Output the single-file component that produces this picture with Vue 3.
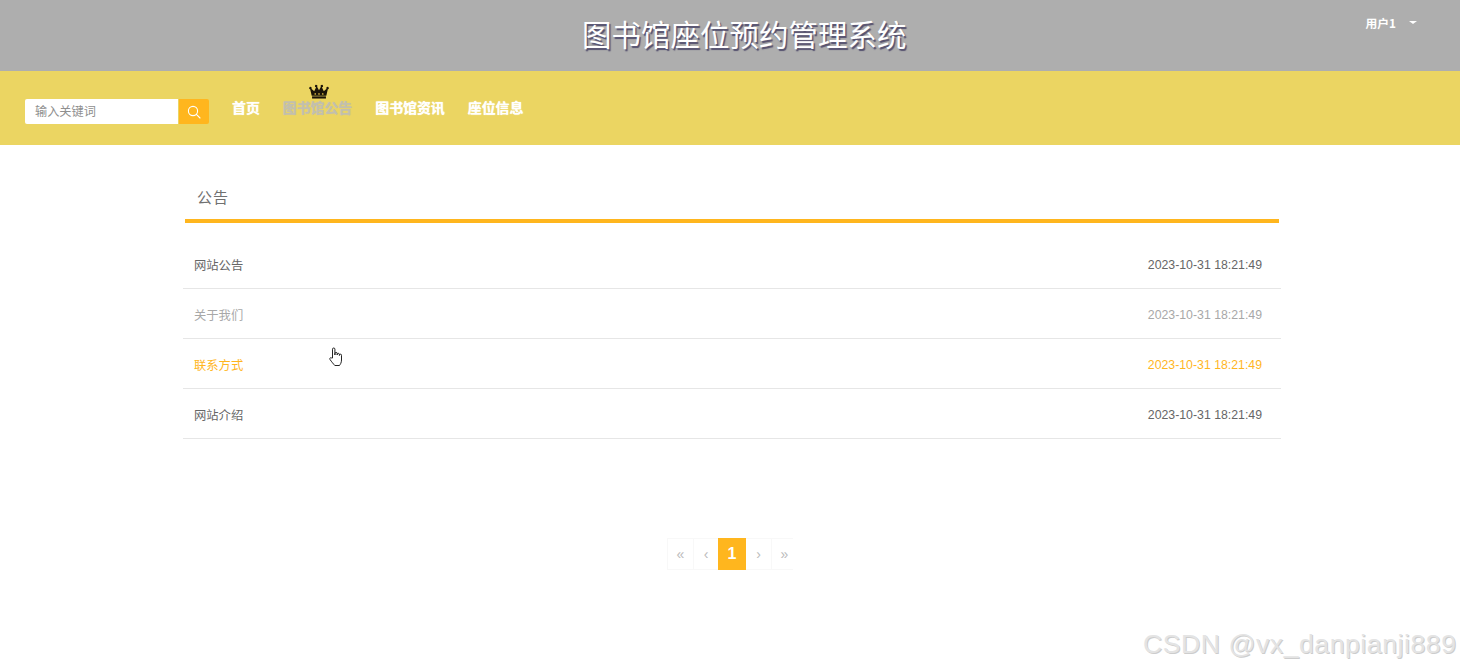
<script setup>
const navItems = [
  { label: '首页' },
  { label: '图书馆公告', active: true },
  { label: '图书馆资讯' },
  { label: '座位信息' },
]
const rows = [
  { title: '网站公告', time: '2023-10-31 18:21:49', state: '' },
  { title: '关于我们', time: '2023-10-31 18:21:49', state: 'muted' },
  { title: '联系方式', time: '2023-10-31 18:21:49', state: 'hover' },
  { title: '网站介绍', time: '2023-10-31 18:21:49', state: '' },
]
</script>

<template>
  <div class="page">
    <header class="top">
      <h1 class="brand">图书馆座位预约管理系统</h1>
      <div class="user">
        <span>用户1</span>
        <i class="caret"></i>
      </div>
    </header>

    <nav class="bar">
      <div class="search">
        <input class="search-input" placeholder="输入关键词" />
        <button class="search-btn" aria-label="搜索">
          <svg width="14" height="14" viewBox="0 0 14 14" fill="none" stroke="#fff" stroke-width="1.1">
            <circle cx="6" cy="6" r="4.6" />
            <path d="M9.4 9.4 13 13" stroke-linecap="round" />
          </svg>
        </button>
      </div>
      <ul class="menu">
        <li v-for="item in navItems" :key="item.label" class="menu-item" :class="{ active: item.active }">
          <svg v-if="item.active" class="crown" width="20" height="15" viewBox="0 0 20 16">
            <path fill="#1a1408" d="M2.2 12.4 0.6 5.6a1.3 1.3 0 1 1 1.3-.5l3 2.6L6.900 3.400a1.300 1.300 0 1 1 1.100-.5L10 6.600 12 2.900a1.300 1.300 0 1 1 1.100.5l2 4.300 3-2.600a1.300 1.300 0 1 1 1.300.5l-1.600 6.800z" />
            <rect x="2.600" y="13.200" width="14.800" height="2.300" fill="#1a1408" />
            <circle cx="6" cy="10.600" r=".9" fill="#c9a93a" />
            <circle cx="10" cy="10.600" r=".9" fill="#c9a93a" />
            <circle cx="14" cy="10.600" r=".9" fill="#c9a93a" />
          </svg>
          {{ item.label }}
        </li>
      </ul>
    </nav>

    <main class="content">
      <div class="heading"><span>公告</span></div>
      <ul class="list">
        <li v-for="row in rows" :key="row.title" class="row" :class="row.state">
          <span class="row-title">{{ row.title }}</span>
          <span class="row-time">{{ row.time }}</span>
        </li>
      </ul>
      <div class="pager">
        <span class="cell w26">«</span>
        <span class="cell w25">‹</span>
        <span class="cell current">1</span>
        <span class="cell w25">›</span>
        <span class="cell w22">»</span>
      </div>
    </main>

    <svg class="pointer" width="14" height="20" viewBox="0 0 14 20" fill="#fff" stroke="#222" stroke-width="1" stroke-linejoin="round">
      <path d="M3.500 11V2.200a1.200 1.200 0 0 1 2.400 0V8l.1-1.500a1.100 1.100 0 0 1 2.200 0V8l.1-.9a1.100 1.100 0 0 1 2.100 0V8.500l.1-.4a1 1 0 0 1 2 0.200V13c0 2.600-1.200 4.400-2 5.500H5.800C4.500 17 2.600 14.800 1 12.500c-.7-1.200.7-2.500 1.600-1.500z" />
    </svg>
    <div class="watermark">CSDN @vx_danpianji889</div>
  </div>
</template>

<style scoped>
.page {
  position: relative;
  width: 1460px;
  height: 670px;
  overflow: hidden;
  background: #fff;
  font-family: "Noto Sans CJK SC", "Liberation Sans", sans-serif;
}
.top {
  height: 71px;
  box-sizing: border-box;
  padding: 0 43px 0 582px;
  background: #aeaeae;
  display: flex;
  justify-content: space-between;
  align-items: flex-start;
}
.brand {
  margin: 10px 0 0;
  font-size: 29.500px;
  line-height: 46px;
  font-weight: 400;
  color: #fff;
  text-shadow: 1.500px 1.500px 1px #54506e;
}
.user {
  margin-top: 14px;
  display: flex;
  align-items: center;
  gap: 13px;
  font-size: 11.800px;
  line-height: 17px;
  font-weight: 700;
  color: #fff;
}
.caret {
  width: 0;
  height: 0;
  border-style: solid;
  border-width: 3.500px 4px 0;
  border-color: #fff transparent transparent;
}
.bar {
  height: 74px;
  box-sizing: border-box;
  padding: 0 0 0 25px;
  background: #ebd562;
  display: flex;
  align-items: flex-start;
  gap: 23px;
}
.search {
  margin-top: 28px;
  display: flex;
  height: 25px;
}
.search-input {
  width: 153px;
  height: 25px;
  box-sizing: border-box;
  padding: 0 10px 2px;
  border: 0;
  border-radius: 2px 0 0 2px;
  outline: 0;
  background: #fff;
  font: 12.200px "Noto Sans CJK SC", sans-serif;
  color: #666;
}
.search-input::placeholder {
  color: #8f8f8f;
}
.search-btn {
  width: 30px;
  height: 25px;
  margin-left: 1px;
  padding: 0;
  border: 0;
  border-radius: 0 2px 2px 0;
  background: #ffb61e;
  display: flex;
  align-items: center;
  justify-content: center;
}
.menu {
  margin: 26px 0 0;
  padding: 0;
  list-style: none;
  display: flex;
  gap: 23px;
}
.menu-item {
  position: relative;
  font-size: 13.900px;
  line-height: 20px;
  font-weight: 700;
  color: #fff;
  text-shadow: 0 0 1px currentColor;
}
.menu-item.active {
  color: #c2bfae;
}
.crown {
  position: absolute;
  top: -13px;
  left: 26px;
}
.content {
  width: 1098px;
  margin: 0 0 0 183px;
  padding-top: 34px;
}
.heading {
  margin: 0 2px;
  height: 40px;
  border-bottom: 4px solid #ffb61e;
  padding-left: 12px;
  line-height: 36px;
  font-size: 15px;
  letter-spacing: 1px;
  color: #707070;
}
.list {
  margin: 16px 0 0;
  padding: 0;
  list-style: none;
}
.row {
  height: 50px;
  box-sizing: border-box;
  border-bottom: 1px solid #e6e6e6;
  padding: 4px 19px 0 11px;
  display: flex;
  justify-content: space-between;
  align-items: center;
  font-size: 12.300px;
  color: #666;
}
.row-title {
  margin-top: -2px;
}
.row-time {
  margin-top: -1px;
  font-family: "Liberation Sans", sans-serif;
}
.row.muted {
  color: #a8a8a8;
}
.row.hover {
  color: #ffb61e;
}
.pager {
  margin: 99px 0 0 484px;
  display: flex;
  height: 32px;
  width: fit-content;
  border-top: 1px solid #f8f8f8;
  border-bottom: 1px solid #f8f8f8;
  box-sizing: border-box;
}
.cell {
  display: flex;
  align-items: center;
  justify-content: center;
  box-sizing: border-box;
  font-family: "Liberation Sans", sans-serif;
  font-size: 14px;
  color: #bbb;
  border-left: 1px solid #f8f8f8;
}
.w26 { width: 26px; }
.w25 { width: 25px; }
.w22 { width: 22px; padding-left: 4px; }
.cell.current {
  width: 28px;
  margin: -1px 0;
  border: 0;
  background: #ffb61e;
  color: #fff;
  font-size: 16px;
  font-weight: 700;
}
.cell.current + .cell {
  border-left: 0;
}
.pointer {
  position: absolute;
  left: 329px;
  top: 347px;
}
.watermark {
  position: absolute;
  left: 1143px;
  top: 626px;
  font-family: "Liberation Sans", sans-serif;
  font-size: 26.500px;
  line-height: 36px;
  letter-spacing: 0.600px;
  white-space: nowrap;
  color: #e4e4e4;
  text-shadow: 1px 1px 0 #cdcdcd;
}
</style>
